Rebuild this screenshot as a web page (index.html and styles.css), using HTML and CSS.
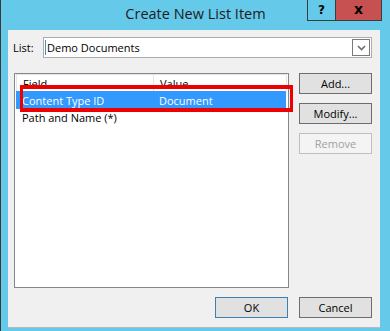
FILE: index.html
```html
<!DOCTYPE html>
<html lang="en">
  <head>
    <meta charset="UTF-8" />
    <title>Create New List Item</title>
    <link rel="stylesheet" href="styles.css">
  </head>
  <body>
    <div class="window">
      <div class="titlebar">
        <div></div>
        <div class="title">Create New List Item</div>
        <div class="caption">
          <div class="cap-btn help">?</div>
          <div class="cap-btn close">x</div>
        </div>
      </div>

      <div class="client">
        <div class="list-row">
          <label>List:</label>
          <div class="combo">
            <span class="caret"></span>
            <span class="combo-text">Demo Documents</span>
            <div class="drop">
              <svg width="9" height="6" viewBox="0 0 9 6">
                <path d="M1 1 L4.5 4.5 L8 1" fill="none" stroke="#6d6d6d" stroke-width="1.6" />
              </svg>
            </div>
          </div>
        </div>

        <div class="main">
          <div class="listview">
            <div class="lv-header">
              <div class="col col-field">Field</div>
              <div class="col col-value">Value</div>
            </div>
            <div class="lv-row selected">
              <div class="col col-field">Content Type ID</div>
              <div class="col col-value">Document</div>
            </div>
            <div class="lv-row">
              <div class="col col-field">Path and Name (*)</div>
              <div class="col col-value"></div>
            </div>
            <!-- annotation -->
            <div class="highlight-box"></div>
          </div>

          <div class="side-buttons">
            <button class="btn">Add...</button>
            <button class="btn">Modify...</button>
            <button class="btn" disabled>Remove</button>
          </div>
        </div>

        <div class="footer">
          <button class="btn default">OK</button>
          <button class="btn">Cancel</button>
        </div>
      </div>
    </div>
  </body>
</html>
```

FILE: styles.css
```css
* {
  box-sizing: border-box;
}

body {
  margin: 0;
  font-family: "Open Sans", "Noto Sans", sans-serif;
  font-size: 11px;
  color: #000;
}

.window {
  width: 390px;
  height: 331px;
  display: flex;
  flex-direction: column;
  background-color: #65c9ea;
  border-left: 1px solid #3a3a3a;
  overflow: hidden;
}

.titlebar {
  height: 30px;
  display: grid;
  grid-template-columns: 1fr auto 1fr;
  align-items: start;
}

.title {
  font-size: 14.5px;
  color: #1c1c1c;
  padding-top: 4px;
}

.caption {
  display: flex;
  justify-content: flex-end;
  padding-right: 8px;
}

.cap-btn {
  height: 21px;
  border: 1px solid #3c3c3c;
  border-top: none;
  display: flex;
  align-items: center;
  justify-content: center;
  font-family: "DejaVu Sans", sans-serif;
  font-weight: bold;
  font-size: 12px;
  color: #000;
}

.help {
  width: 28px;
  border-right: none;
}

.close {
  width: 47px;
  background-color: #c75050;
  font-size: 14px;
  padding-bottom: 2px;
}

.client {
  flex: 1;
  margin: 0 10px 4px 7px;
  background-color: #f0f0f0;
  box-shadow: 0 1px 0 #b9b9b9;
  display: flex;
  flex-direction: column;
  padding: 7px 8px 9px 5px;
}

.list-row {
  display: flex;
  align-items: center;
  height: 21px;
}

.list-row label {
  width: 30px;
}

.combo {
  flex: 1;
  height: 21px;
  border: 1px solid #acacac;
  background-color: #fff;
  display: flex;
  align-items: center;
  padding: 0 1px 0 1px;
}

.caret {
  width: 1px;
  height: 15px;
  background-color: #3d8fd6;
  margin-right: 1px;
}

.combo-text {
  flex: 1;
}

.drop {
  width: 18px;
  height: 17px;
  border: 1px solid #7a7a7a;
  background-color: #fff;
  display: flex;
  align-items: center;
  justify-content: center;
}

.main {
  display: flex;
  gap: 10px;
  margin-top: 15px;
  height: 215px;
  padding-left: 1px;
}

.listview {
  position: relative;
  width: 276px;
  border: 1px solid #828790;
  background-color: #fff;
  padding: 0 1px;
}

.lv-header {
  display: flex;
  height: 17px;
  border: 1px solid #e5e5e5;
  border-bottom: none;
  align-items: center;
}

.lv-header .col-field {
  border-right: 1px solid #e5e5e5;
}

.col {
  height: 100%;
  display: flex;
  align-items: center;
}

.col-field {
  width: 137px;
  padding-left: 6px;
}

.col-value {
  flex: 1;
  padding-left: 6px;
}

.lv-row {
  display: flex;
  height: 17px;
  margin-right: 1px;
}

.lv-row.selected {
  height: 18px;
  background-color: #3399ff;
  color: #fff;
}

.highlight-box {
  position: absolute;
  left: 5px;
  top: 11px;
  width: 273px;
  height: 27px;
  border: 4px solid #ee0000;
  border-left-width: 3px;
  border-right-width: 3px;
}

.side-buttons {
  display: flex;
  flex-direction: column;
  gap: 9px;
}

.btn {
  width: 73px;
  height: 21px;
  font-family: inherit;
  font-size: 11px;
  color: #000;
  background-color: #e1e1e1;
  border: 1px solid #6d6d6d;
  padding: 0;
}

.btn:disabled {
  background-color: #f4f4f4;
  border-color: #bfbfbf;
  color: #a0a0a0;
}

.btn.default {
  border-color: #3c7fb1;
}

.footer {
  margin-top: auto;
  display: flex;
  justify-content: flex-end;
  gap: 11px;
}
```
